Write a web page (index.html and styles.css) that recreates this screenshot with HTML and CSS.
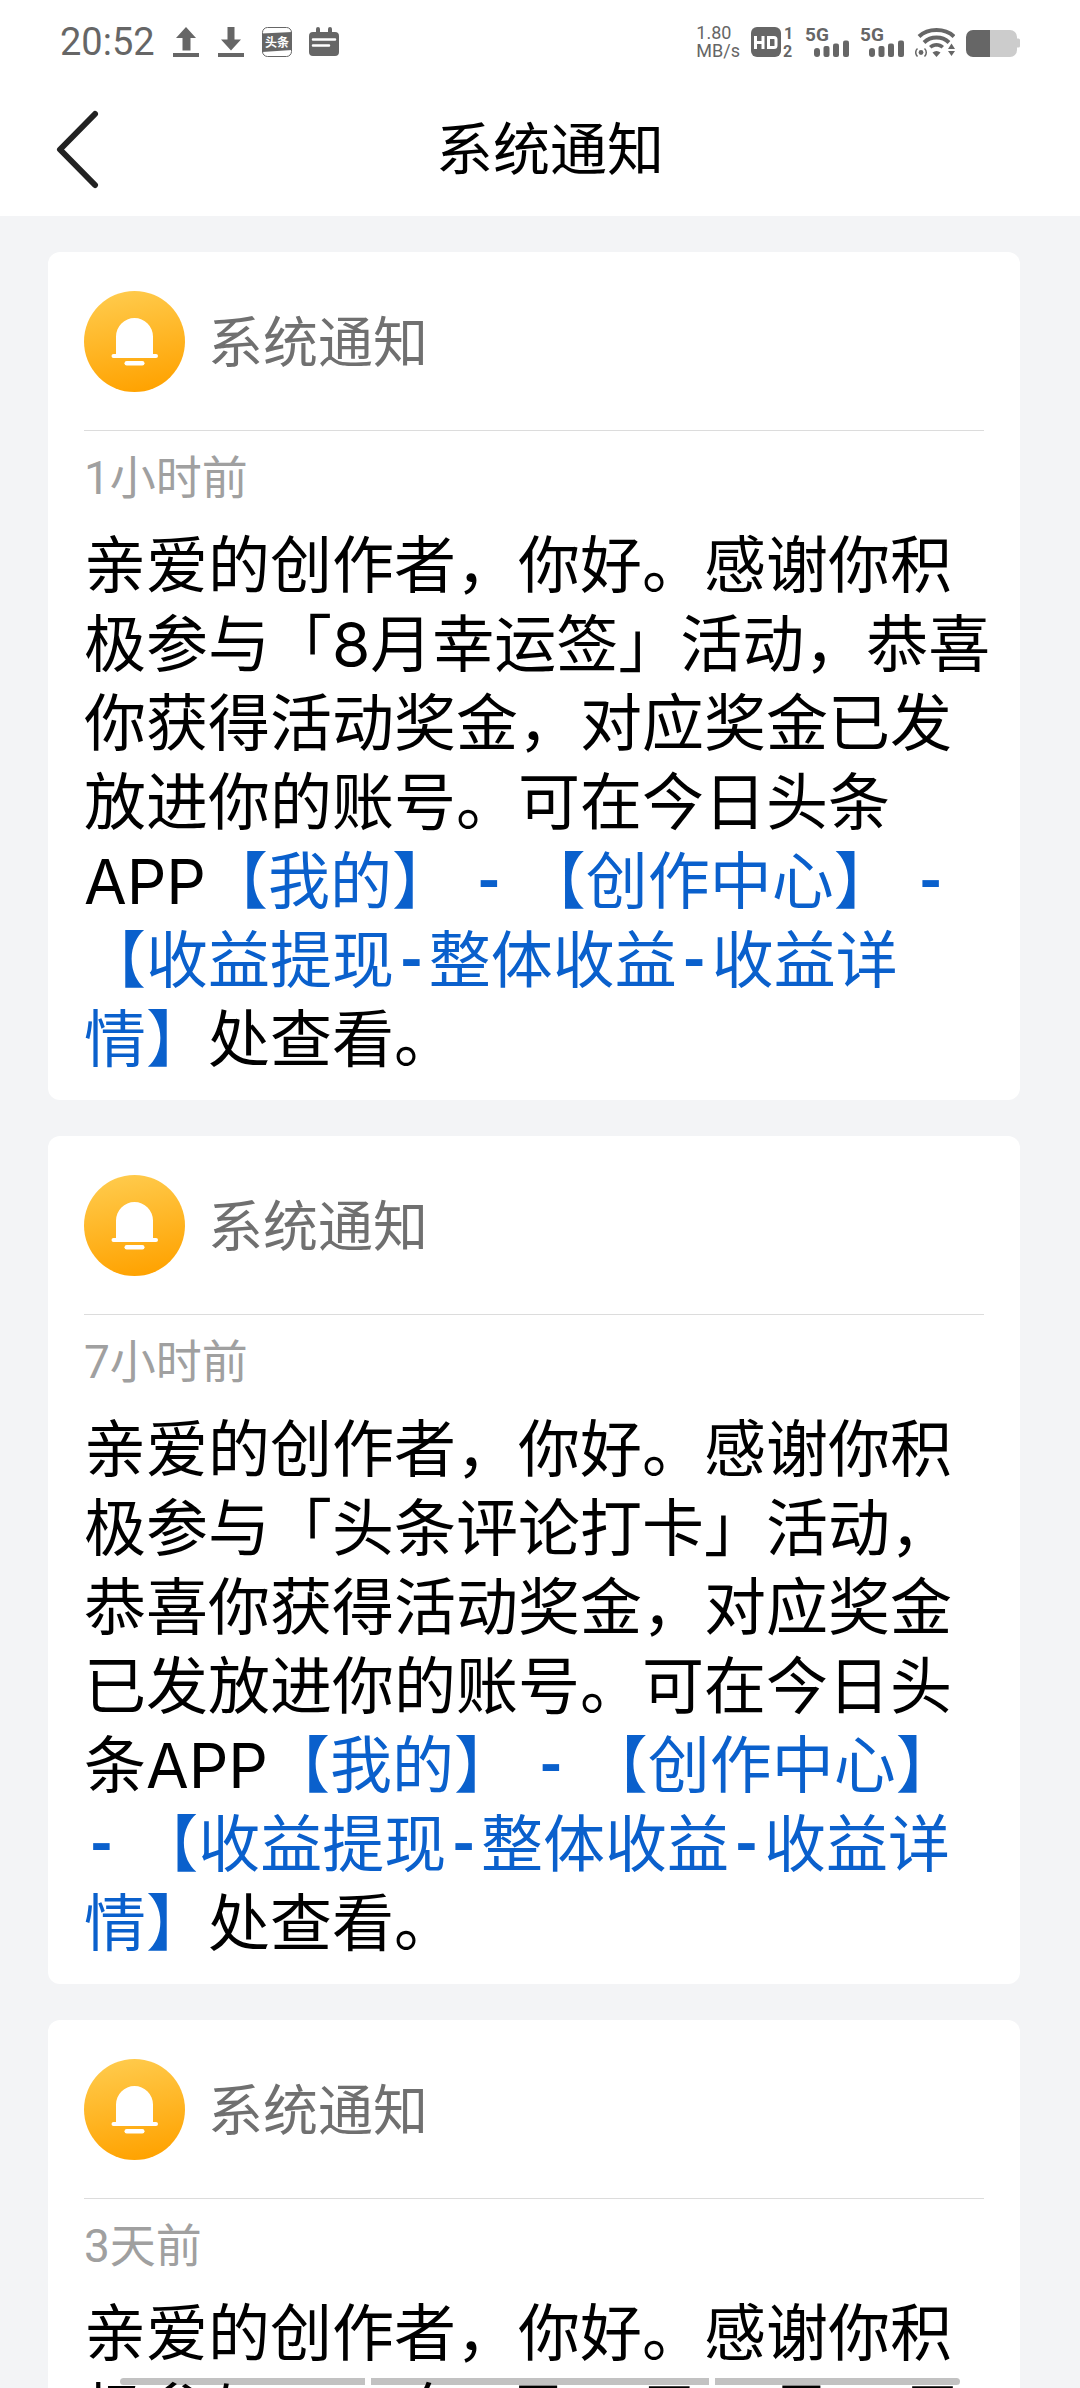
FILE: index.html
```html
<!DOCTYPE html>
<html lang="zh-CN">
<head>
<meta charset="utf-8">
<meta name="viewport" content="width=device-width">
<title>系统通知</title>
<link rel="stylesheet" href="styles.css">
</head>
<body>
<svg class="defs" width="0" height="0" aria-hidden="true">
  <defs>
    <linearGradient id="gold" x1="0.4" y1="0" x2="0.6" y2="1">
      <stop offset="0" stop-color="#ffca4b"/>
      <stop offset="1" stop-color="#ffa200"/>
    </linearGradient>
    <symbol id="bell" viewBox="0 0 101 101">
      <circle cx="50.500" cy="50.500" r="50.500" fill="url(#gold)"/>
      <path fill="#fff" d="M32 63V45.500a18.500 18.500 0 0 1 37 0V63h3a2 2 0 0 1 0 4H29.500a2 2 0 0 1 0-4z"/>
      <rect x="40.500" y="70" width="20" height="4.500" rx="2.200" fill="#fff"/>
    </symbol>
    <symbol id="signal" viewBox="0 0 44 30" overflow="visible">
      <text x="0" y="14" class="glyph-text" font-size="19">5G</text>
      <rect x="9" y="21" width="6" height="9" rx="3"/>
      <rect x="18.500" y="19" width="6" height="11" rx="2"/>
      <rect x="28" y="16.500" width="6" height="13.500" rx="2"/>
      <rect x="38" y="13.500" width="6" height="16.500" rx="2"/>
    </symbol>
  </defs>
</svg>

<div class="status">
  <div class="status-left">
    <time class="clock">20:52</time>
    <svg width="28" height="30" viewBox="0 0 28 30"><path d="M14 0l10 11h-5.500v12.500h-8V11H4zM1 26h26v4H1z"/></svg>
    <svg width="28" height="30" viewBox="0 0 28 30"><path d="M10.500 0h7v12.500H24L14 23.500 4 12.500h6.500zM1 26h26v4H1z"/></svg>
    <svg width="30" height="30" viewBox="0 0 30 30">
      <rect x="0.500" y="0.500" width="29" height="29" rx="5" fill="#fff" stroke="#666"/>
      <path d="M0 6.500L30 5v18L0 25z"/>
      <text x="15" y="19.500" class="glyph-text light" font-size="12" text-anchor="middle">头条</text>
    </svg>
    <svg width="30" height="30" viewBox="0 0 30 30">
      <path d="M4 5h3V2a2 2 0 0 1 4 0v3h8V2a2 2 0 0 1 4 0v3h3a4 4 0 0 1 4 4v16a4 4 0 0 1-4 4H4a4 4 0 0 1-4-4V9a4 4 0 0 1 4-4z"/>
      <path d="M4 12.500h22M4 18.500h16" stroke="#fff" stroke-width="2.500" stroke-linecap="round"/>
    </svg>
  </div>
  <div class="status-right">
    <div class="speed"><span>1.80</span><span>MB/s</span></div>
    <svg class="hd" width="43" height="30" viewBox="0 0 43 30">
      <rect width="30" height="30" rx="6"/>
      <path d="M4.500 9v13M4.500 15.500h7M12 9v13M17.500 10.500h5.500a2 2 0 0 1 2 2v6a2 2 0 0 1-2 2h-5.500z" fill="none" stroke="#fff" stroke-width="3"/>
      <text x="33" y="12" class="glyph-text" font-size="16">1</text>
      <text x="32" y="30" class="glyph-text" font-size="16">2</text>
    </svg>
    <svg width="44" height="30"><use href="#signal"/></svg>
    <svg width="44" height="30"><use href="#signal"/></svg>
    <svg width="40" height="30" viewBox="0 0 40 30">
      <g fill="none" stroke="#666" stroke-width="4">
        <path d="M4 9.500C13 .8 30 .8 39 9.500"/>
        <path d="M9 15.500c7-6.600 18-6.600 25 0"/>
      </g>
      <path d="M14 19c4-4 11-4 15 0l-2.500 2.500c-3-2.500-7-2.500-10 0zM17.500 25.500c2.500-2 5.500-2 8 0l-4 4.500zM36.500 16.500l3.500 5.500h-7zM36.500 29l3.500-5h-7z"/>
      <circle cx="6" cy="25.500" r="2.400"/>
      <path d="M2.500 21.500c-2.400 2.200-2.400 5.800 0 8M9.500 21.500c2.400 2.200 2.400 5.800 0 8" fill="none" stroke="#666" stroke-width="1.500"/>
    </svg>
    <svg width="54" height="30" viewBox="0 0 54 30">
      <path d="M24 3h20a7 7 0 0 1 7 7v1.500h1.500a1.500 1.500 0 0 1 1.500 1.500v6a1.500 1.500 0 0 1-1.500 1.500H51V23a7 7 0 0 1-7 7H24z" fill="#ccc"/>
      <path d="M7 3h17v27H7a7 7 0 0 1-7-7V10a7 7 0 0 1 7-7z"/>
    </svg>
  </div>
</div>

<header class="bar">
  <button class="back" type="button" aria-label="返回">
    <svg width="44" height="80" viewBox="0 0 44 80"><path d="M39 4L4 39.500 39 75" fill="none" stroke="#222" stroke-width="6" stroke-linecap="round" stroke-linejoin="round"/></svg>
  </button>
  <h1>系统通知</h1>
</header>

<main class="list">
  <article class="card">
    <header class="card-head">
      <svg class="bell" aria-hidden="true"><use href="#bell"/></svg>
      <h2>系统通知</h2>
    </header>
    <time class="when">1小时前</time>
    <p>亲爱的创作者，你好。感谢你积<br>极参与「8月幸运签」活动，恭喜<br>你获得活动奖金，对应奖金已发<br>放进你的账号。可在今日头条<br>APP<a href="#">【我的】 <span class="dash">-</span> 【创作中心】 <span class="dash">-</span><br>【收益提现<span class="dash">-</span>整体收益<span class="dash">-</span>收益详<br>情】</a>处查看。</p>
  </article>

  <article class="card">
    <header class="card-head">
      <svg class="bell" aria-hidden="true"><use href="#bell"/></svg>
      <h2>系统通知</h2>
    </header>
    <time class="when">7小时前</time>
    <p>亲爱的创作者，你好。感谢你积<br>极参与「头条评论打卡」活动，<br>恭喜你获得活动奖金，对应奖金<br>已发放进你的账号。可在今日头<br>条APP<a href="#">【我的】 <span class="dash">-</span> 【创作中心】<br><span class="dash">-</span> 【收益提现<span class="dash">-</span>整体收益<span class="dash">-</span>收益详<br>情】</a>处查看。</p>
  </article>

  <article class="card">
    <header class="card-head">
      <svg class="bell" aria-hidden="true"><use href="#bell"/></svg>
      <h2>系统通知</h2>
    </header>
    <time class="when">3天前</time>
    <p>亲爱的创作者，你好。感谢你积<br>极参与<span class="date">2025年7月17日<span class="dash">-</span>8月14日</span></p>
  </article>
</main>

<div class="gesture" aria-hidden="true"><i></i><i class="wide"></i><i></i></div>
</body>
</html>
```
FILE: styles.css
```css
* {
  box-sizing: border-box;
  margin: 0;
  padding: 0;
}

body {
  display: flex;
  flex-direction: column;
  height: 100vh;
  overflow: hidden;
  background: #f3f4f6;
  color: #000;
  font-family: Inter, "Noto Sans CJK SC", sans-serif;
  font-weight: 400;
}

.defs {
  position: absolute;
}

.status {
  display: flex;
  flex: none;
  justify-content: space-between;
  align-items: center;
  height: 84px;
  padding: 0 60px;
  background: #fff;
  color: #666;
  font-family: Roboto, sans-serif;
}

.status svg {
  display: block;
  fill: #666;
}

.status .hd {
  overflow: visible;
}

.status-left,
.status-right {
  display: flex;
  align-items: center;
}

.status-left {
  gap: 17px;
}

.status-right {
  gap: 11px;
}

.clock {
  font-size: 38px;
  line-height: 46px;
}

.speed {
  display: flex;
  flex-direction: column;
  font-size: 18px;
  line-height: 18px;
}

.glyph-text {
  font-family: Roboto, "Noto Sans CJK SC", sans-serif;
  font-weight: 700;
}

.light {
  fill: #fff;
}

.bar {
  display: grid;
  grid-template-columns: 1fr auto 1fr;
  flex: none;
  align-items: center;
  height: 132px;
  padding: 0 36px 0 56px;
  background: #fff;
}

.back {
  justify-self: start;
  border: 0;
  background: none;
}

.back svg {
  display: block;
}

.bar h1 {
  font-size: 57px;
  line-height: 80px;
  font-weight: 400;
}

.list {
  display: flex;
  flex: 1;
  flex-direction: column;
  gap: 36px;
  min-height: 0;
  padding: 36px 60px 0 48px;
  overflow: hidden;
}

.card {
  flex: none;
  padding: 0 36px 21px;
  border-radius: 12px;
  background: #fff;
}

.card-head {
  display: flex;
  align-items: center;
  gap: 23px;
  padding: 39px 0 38px;
  border-bottom: 1px solid #dcdcdc;
}

.bell {
  width: 101px;
  height: 101px;
}

.card-head h2 {
  color: #707070;
  font-size: 55px;
  line-height: 80px;
  font-weight: 400;
}

.when {
  display: block;
  padding: 15px 0 16px;
  color: #a0a0a0;
  font-family: Roboto, "Noto Sans CJK SC", sans-serif;
  font-size: 46px;
  line-height: 64px;
}

.card p {
  font-size: 62px;
  line-height: 79px;
  white-space: nowrap;
}

.card a {
  color: #0a60cc;
  text-decoration: none;
}

.date {
  font-family: Roboto, "Noto Sans CJK SC", sans-serif;
}

.dash {
  font-family: "Liberation Mono", monospace;
  font-size: 58px;
  font-weight: 700;
  line-height: 1;
  vertical-align: 5px;
}

/* Translucent system gesture strip over the page */
.gesture {
  position: fixed;
  right: 120px;
  bottom: 3px;
  left: 120px;
  display: flex;
  gap: 6px;
  height: 7px;
}

.gesture i {
  flex: 245;
  background: rgba(0, 0, 0, 0.24);
}

.gesture .wide {
  flex: 338;
}

.gesture i:first-child {
  border-radius: 4px 0 0 4px;
}

.gesture i:last-child {
  border-radius: 0 4px 4px 0;
}
```
